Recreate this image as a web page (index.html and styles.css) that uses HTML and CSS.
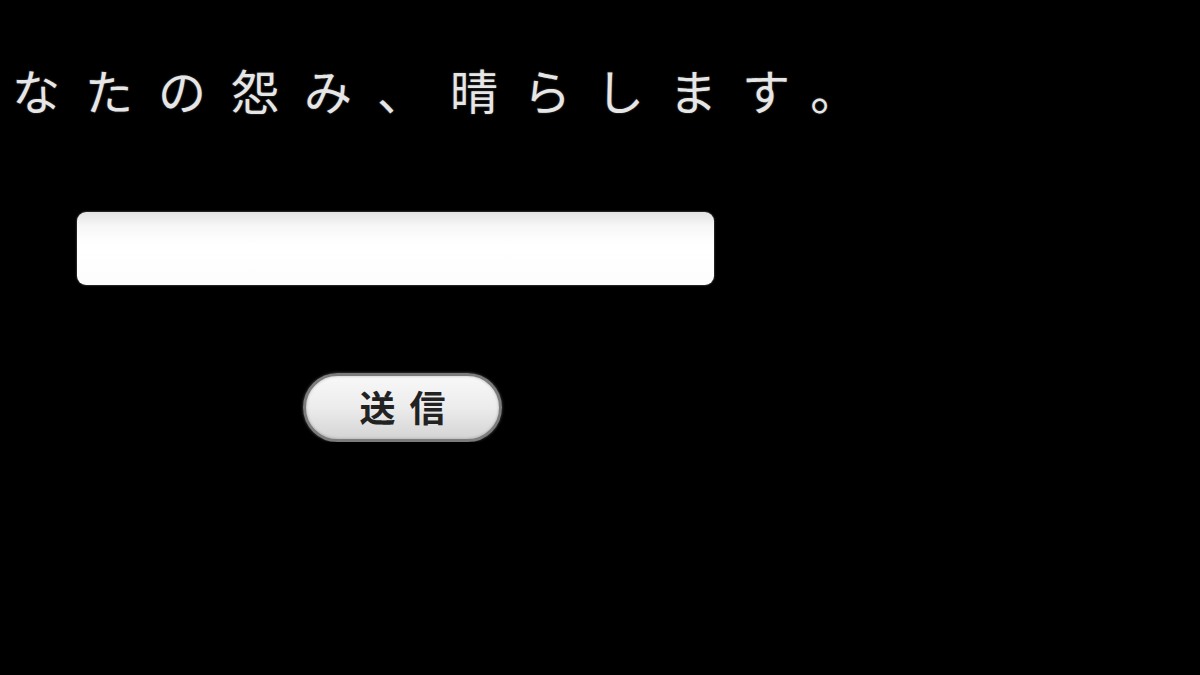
FILE: index.html
```html
<!DOCTYPE html>
<html lang="ja">
<head>
    <meta charset="UTF-8">
    <meta name="viewport" content="width=device-width, initial-scale=1.0">
    <title>怨み晴らします</title>
    <link rel="stylesheet" href="styles.css">
</head>
<body>

<div class="page">
    <h1 class="headline">なたの怨み、晴らします。</h1>

    <form class="request-form" onsubmit="return false;">
        <input type="text" class="request-input" name="target" aria-label="target">
        <button type="submit" class="send-button">送信</button>
    </form>
</div>

</body>
</html>
```

FILE: styles.css
```css
body { margin: 0; background: #000; font-family: "Noto Sans CJK JP", "Noto Sans", sans-serif; }
.page { padding: 59px 0 0 12px; }

.headline {
    margin: 0;
    font-size: 48px;
    line-height: 60px;
    font-weight: 400;
    letter-spacing: 25px;
    color: #e6e6e6;
    text-shadow: 0 0 2px rgba(255,255,255,0.35);
    white-space: nowrap;
}

.request-form { display: flex; flex-direction: column; align-items: flex-start; padding: 93px 0 0 65px; }

.request-input {
    width: 637px;
    height: 73px;
    box-sizing: border-box;
    border: none;
    border-radius: 9px;
    background: linear-gradient(#e4e4e4 0%, #f7f7f7 20%, #fff 45%, #fdfdfd 100%);
    box-shadow: 0 0 2px rgba(255,255,255,0.5);
    outline: none;
    padding: 0 14px;
    font-size: 28px;
}

.send-button {
    margin: 88px 0 0 226px;
    width: 199px;
    height: 69px;
    box-sizing: border-box;
    border: 3px solid #7c7c7c;
    border-radius: 35px;
    background: linear-gradient(#f8f8f8 0%, #ececec 50%, #d4d4d4 100%);
    box-shadow: inset 0 0 3px rgba(0,0,0,0.25), 0 0 3px rgba(255,255,255,0.35);
    font-family: "Noto Sans CJK JP", sans-serif;
    font-size: 36px;
    font-weight: 700;
    letter-spacing: 14px;
    padding: 0 0 4px 14px;
    color: #222;
    cursor: pointer;
}
```
